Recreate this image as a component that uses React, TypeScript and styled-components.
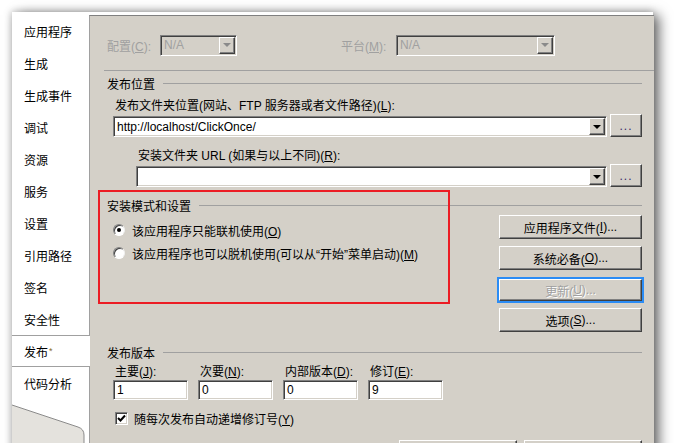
import React from "react";
import styled, { createGlobalStyle, css } from "styled-components";

const Global = createGlobalStyle`
  html, body { margin: 0; padding: 0; background: #fff; overflow: hidden; }
  body {
    font-family: "Liberation Sans", "Noto Sans CJK SC", sans-serif;
    font-size: 12px;
    color: #000;
  }
  * { box-sizing: border-box; }
`;

const sunken = css`
  border: 1px solid;
  border-color: #808080 #fff #fff #808080;
  box-shadow: inset 1px 1px #404040, inset -1px -1px #d4d0c8;
`;

const raised = css`
  border: 1px solid;
  border-color: #fff #404040 #404040 #fff;
  box-shadow: inset -1px -1px #808080;
  background: #d4d0c8;
`;

const Page = styled.div`
  width: 674px;
  height: 443px;
  overflow: hidden;
  padding: 12px 0 0 12px;
  background: #fff;
`;

const Window = styled.div`
  width: 641px;
  height: 470px;
  display: flex;
  background: #fff;
  box-shadow: 6px 3px 12px rgba(0, 0, 0, 0.6), -1px -1px 7px rgba(0, 0, 0, 0.2);
`;

const Sidebar = styled.nav`
  width: 77px;
  flex: none;
  display: flex;
  flex-direction: column;
  padding-top: 3px;
  background: #fff;
`;

const NavItem = styled.div<{ $active?: boolean }>`
  height: 32px;
  display: flex;
  align-items: center;
  padding-left: 12px;
  white-space: nowrap;
  ${(p) =>
    p.$active &&
    css`
      border-top: 1px solid #a0a0a0;
      border-bottom: 1px solid #a0a0a0;
      margin-right: -1px;
      position: relative;
      z-index: 1;
      background: #fff;
    `}
`;

const Star = styled.span`
  font-size: 9px;
  color: #8a6a2a;
  vertical-align: top;
  margin-left: 1px;
`;

const TabFoot = styled.svg`
  display: block;
  flex: none;
`;

const Panel = styled.main`
  flex: 1;
  margin-top: 3px;
  border-top: 1px solid #808080;
  border-left: 1px solid #a0a0a0;
  background: #d4d0c8;
  position: relative;
  display: flex;
  flex-direction: column;
  padding-right: 12px;
`;

const TopRow = styled.div`
  margin-top: 18px;
  padding-left: 17px;
  height: 22px;
  display: flex;
  align-items: center;
`;

const DimLabel = styled.span<{ $w: number; $ml?: number }>`
  width: ${(p) => p.$w}px;
  margin-left: ${(p) => p.$ml ?? 0}px;
  color: #a0a0a0;
  white-space: nowrap;
`;

const U = styled.span`
  text-decoration: underline;
`;

const Combo = styled.div<{ $w: number; $disabled?: boolean }>`
  ${sunken};
  width: ${(p) => p.$w}px;
  height: ${(p) => (p.$disabled ? 21 : 21)}px;
  background: ${(p) => (p.$disabled ? "#d4d0c8" : "#fff")};
  color: ${(p) => (p.$disabled ? "#a0a0a0" : "#000")};
  display: flex;
  align-items: center;
  padding: 0 1px 0 3px;
  white-space: nowrap;
`;

const ComboText = styled.span`
  flex: 1;
  overflow: hidden;
`;

const DropBtn = styled.div`
  ${raised};
  width: 16px;
  height: 17px;
  flex: none;
  display: flex;
  align-items: center;
  justify-content: center;
`;

const Arrow = styled.span<{ $disabled?: boolean }>`
  width: 0;
  height: 0;
  border-left: 4px solid transparent;
  border-right: 4px solid transparent;
  border-top: 4px solid ${(p) => (p.$disabled ? "#8a8a8a" : "#000")};
`;

const Separator = styled.div`
  margin: 14px -12px 0 14px;
  height: 1px;
  background: #a0a0a0;
`;

const GroupHeader = styled.div<{ $mt: number }>`
  margin-top: ${(p) => p.$mt}px;
  padding-left: 17px;
  height: 16px;
  display: flex;
  align-items: center;
  gap: 8px;
  white-space: nowrap;
  &::after {
    content: "";
    flex: 1;
    height: 1px;
    background: #a0a0a0;
  }
`;

const FieldLabel = styled.div<{ $mt: number; $pl: number }>`
  margin-top: ${(p) => p.$mt}px;
  padding-left: ${(p) => p.$pl}px;
  height: 15px;
  line-height: 15px;
  white-space: nowrap;
`;

const ComboRow = styled.div<{ $pl: number }>`
  padding-left: ${(p) => p.$pl}px;
  height: 23px;
  display: flex;
  align-items: flex-end;
`;

const BrowseBtn = styled.div`
  ${raised};
  width: 32px;
  height: 23px;
  margin-left: 3px;
  display: flex;
  align-items: center;
  justify-content: center;
  color: #3a2a6a;
  letter-spacing: 1px;
`;

const InstallBody = styled.div`
  display: flex;
  justify-content: space-between;
  padding-left: 23px;
`;

const RadioList = styled.div`
  display: flex;
  flex-direction: column;
  gap: 7px;
  margin-top: 9px;
`;

const RadioRow = styled.label`
  height: 16px;
  display: flex;
  align-items: center;
  gap: 7px;
  white-space: nowrap;
`;

const RadioDot = styled.span<{ $checked?: boolean }>`
  width: 12px;
  height: 12px;
  border-radius: 50%;
  background: #fff;
  border: 1px solid;
  border-color: #808080 #f0f0f0 #fff #808080;
  box-shadow: inset 1px 1px #404040;
  display: flex;
  align-items: center;
  justify-content: center;
  &::after {
    content: "";
    width: 4px;
    height: 4px;
    border-radius: 50%;
    background: ${(p) => (p.$checked ? "#000" : "transparent")};
  }
`;

const ButtonCol = styled.div`
  display: flex;
  flex-direction: column;
  width: 143px;
  margin-top: 2px;
`;

const PushBtn = styled.div<{ $focused?: boolean; $disabled?: boolean }>`
  ${raised};
  height: ${(p) => (p.$focused ? 22 : 24)}px;
  margin-top: ${(p) => (p.$focused ? 9 : 7)}px;
  &:first-child { margin-top: 0; }
  display: flex;
  align-items: center;
  justify-content: center;
  white-space: nowrap;
  color: ${(p) => (p.$disabled ? "#a0a0a0" : "#000")};
  ${(p) => p.$disabled && css`text-shadow: 1px 1px #fff;`}
  ${(p) => p.$focused && css`outline: 2px solid #2b8cf5;`}
`;

const VersionRow = styled.div`
  margin-top: 5px;
  padding-left: 23px;
  display: flex;
  gap: 10px;
`;

const VersionCol = styled.div`
  display: flex;
  flex-direction: column;
  width: 75px;
`;

const VersionLabel = styled.div`
  height: 15px;
  line-height: 15px;
  padding-left: 2px;
  white-space: nowrap;
`;

const TextBox = styled.div`
  ${sunken};
  height: 20px;
  background: #fff;
  display: flex;
  align-items: center;
  padding-left: 3px;
`;

const CheckRow = styled.label`
  margin-top: 11px;
  padding-left: 25px;
  height: 14px;
  display: flex;
  align-items: center;
  gap: 6px;
  white-space: nowrap;
`;

const CheckBox = styled.span`
  ${sunken};
  width: 13px;
  height: 13px;
  background: #fff;
  display: flex;
  align-items: center;
  justify-content: center;
`;

const BottomRow = styled.div`
  margin-top: 15px;
  display: flex;
  justify-content: flex-end;
  gap: 7px;
`;

const BottomBtn = styled.div`
  ${raised};
  width: 118px;
  height: 23px;
`;

const Annotation = styled.div`
  position: absolute;
  left: 8px;
  top: 174px;
  width: 352px;
  height: 114px;
  border: 2px solid #ec1c24;
  pointer-events: none;
`;

const navItems = [
  "应用程序",
  "生成",
  "生成事件",
  "调试",
  "资源",
  "服务",
  "设置",
  "引用路径",
  "签名",
  "安全性",
  "发布",
  "代码分析",
];

export default function App() {
  return (
    <>
      <Global />
      <Page>
        <Window>
          <Sidebar>
            {navItems.map((n) => (
              <NavItem key={n} $active={n === "发布"}>
                {n}
                {n === "发布" && <Star>*</Star>}
              </NavItem>
            ))}
            <TabFoot width="77" height="50" viewBox="0 0 77 50">
              <path d="M0 6 L66 28 Q72 30 72 36 L72 50 L0 50 Z" fill="#e4e2dd" />
              <path d="M0 6 L66 28 Q72 30 72 36 L72 50" fill="none" stroke="#8a8a8a" strokeWidth="1" />
            </TabFoot>
          </Sidebar>
          <Panel>
            <TopRow>
              <DimLabel $w={53}>
                配置(<U>C</U>):
              </DimLabel>
              <Combo $w={77} $disabled>
                <ComboText>N/A</ComboText>
                <DropBtn>
                  <Arrow $disabled />
                </DropBtn>
              </Combo>
              <DimLabel $w={55} $ml={104}>
                平台(<U>M</U>):
              </DimLabel>
              <Combo $w={159} $disabled>
                <ComboText>N/A</ComboText>
                <DropBtn>
                  <Arrow $disabled />
                </DropBtn>
              </Combo>
            </TopRow>
            <Separator />
            <GroupHeader $mt={4}>发布位置</GroupHeader>
            <FieldLabel $mt={8} $pl={25}>
              发布文件夹位置(网站、FTP 服务器或者文件路径)(<U>L</U>):
            </FieldLabel>
            <ComboRow $pl={23}>
              <Combo $w={494}>
                <ComboText>http://localhost/ClickOnce/</ComboText>
                <DropBtn>
                  <Arrow />
                </DropBtn>
              </Combo>
              <BrowseBtn>...</BrowseBtn>
            </ComboRow>
            <FieldLabel $mt={12} $pl={48}>
              安装文件夹 URL (如果与以上不同)(<U>R</U>):
            </FieldLabel>
            <ComboRow $pl={46}>
              <Combo $w={471}>
                <ComboText />
                <DropBtn>
                  <Arrow />
                </DropBtn>
              </Combo>
              <BrowseBtn>...</BrowseBtn>
            </ComboRow>
            <GroupHeader $mt={10}>安装模式和设置</GroupHeader>
            <InstallBody>
              <RadioList>
                <RadioRow>
                  <RadioDot $checked />
                  <span>
                    该应用程序只能联机使用(<U>O</U>)
                  </span>
                </RadioRow>
                <RadioRow>
                  <RadioDot />
                  <span>
                    该应用程序也可以脱机使用(可以从{"\u201C"}开始{"\u201D"}菜单启动)(<U>M</U>)
                  </span>
                </RadioRow>
              </RadioList>
              <ButtonCol>
                <PushBtn>
                  应用程序文件(<U>I</U>)...
                </PushBtn>
                <PushBtn>
                  系统必备(<U>O</U>)...
                </PushBtn>
                <PushBtn $focused $disabled>
                  更新(<U>U</U>)...
                </PushBtn>
                <PushBtn>
                  选项(<U>S</U>)...
                </PushBtn>
              </ButtonCol>
            </InstallBody>
            <GroupHeader $mt={12}>发布版本</GroupHeader>
            <VersionRow>
              {[
                ["主要", "J", "1"],
                ["次要", "N", "0"],
                ["内部版本", "D", "0"],
                ["修订", "E", "9"],
              ].map(([l, k, v]) => (
                <VersionCol key={l}>
                  <VersionLabel>
                    {l}(<U>{k}</U>):
                  </VersionLabel>
                  <TextBox>{v}</TextBox>
                </VersionCol>
              ))}
            </VersionRow>
            <CheckRow>
              <CheckBox>
                <svg width="9" height="9" viewBox="0 0 9 9">
                  <path d="M1 4 L3.5 6.5 L8 1.5" fill="none" stroke="#000" strokeWidth="2" />
                </svg>
              </CheckBox>
              <span>
                随每次发布自动递增修订号(<U>Y</U>)
              </span>
            </CheckRow>
            <BottomRow>
              <BottomBtn />
              <BottomBtn />
            </BottomRow>
            <Annotation />
          </Panel>
        </Window>
      </Page>
    </>
  );
}
